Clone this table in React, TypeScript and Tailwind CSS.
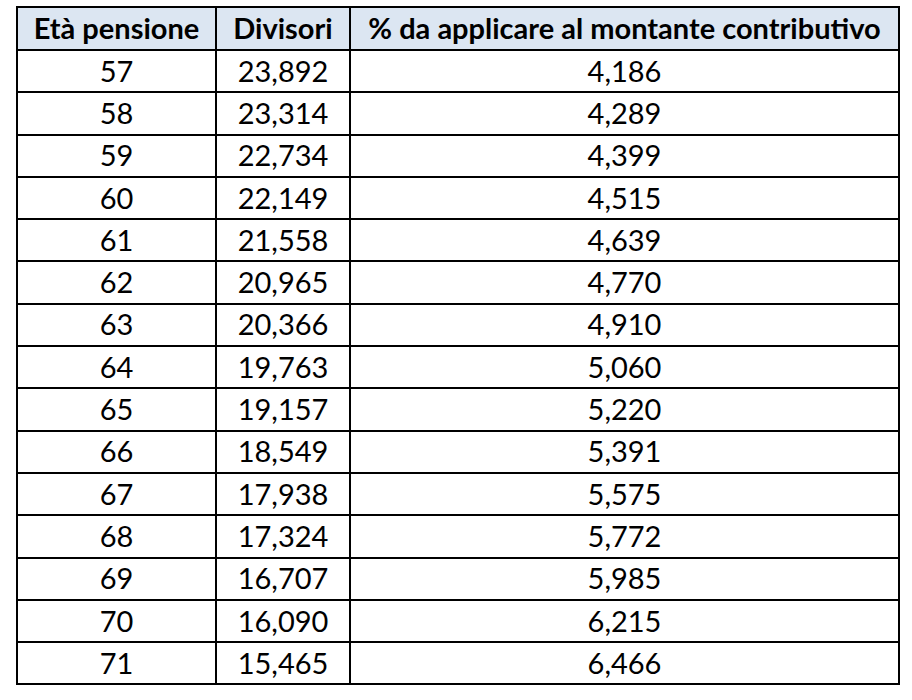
const rows: [string, string, string][] = [
  ["57", "23,892", "4,186"],
  ["58", "23,314", "4,289"],
  ["59", "22,734", "4,399"],
  ["60", "22,149", "4,515"],
  ["61", "21,558", "4,639"],
  ["62", "20,965", "4,770"],
  ["63", "20,366", "4,910"],
  ["64", "19,763", "5,060"],
  ["65", "19,157", "5,220"],
  ["66", "18,549", "5,391"],
  ["67", "17,938", "5,575"],
  ["68", "17,324", "5,772"],
  ["69", "16,707", "5,985"],
  ["70", "16,090", "6,215"],
  ["71", "15,465", "6,466"],
]

export default function App() {
  return (
    <div className="w-[912px] h-[700px] bg-white pt-[6px] pl-[16px] font-['Lato',sans-serif] text-black">
      <table className="border-collapse w-[882px] table-fixed">
        <colgroup>
          <col className="w-[199px]" />
          <col className="w-[134px]" />
          <col className="w-[549px]" />
        </colgroup>
        <thead>
          <tr className="h-[43px] bg-[#dce6f2] text-[29px] font-bold leading-none">
            <th className="border-2 border-black p-0 pb-[3px] text-center">Età pensione</th>
            <th className="border-2 border-black p-0 pb-[3px] text-center">Divisori</th>
            <th className="border-2 border-black p-0 pb-[3px] text-center">% da applicare al montante contributivo</th>
          </tr>
        </thead>
        <tbody>
          {rows.map(([age, div, pct]) => (
            <tr key={age} className="h-[42.3px] text-[29px] leading-none">
              <td className="border-2 border-black p-0 pb-[2px] text-center">{age}</td>
              <td className="border-2 border-black p-0 pb-[2px] text-center">{div}</td>
              <td className="border-2 border-black p-0 pb-[2px] text-center">{pct}</td>
            </tr>
          ))}
        </tbody>
      </table>
    </div>
  )
}
